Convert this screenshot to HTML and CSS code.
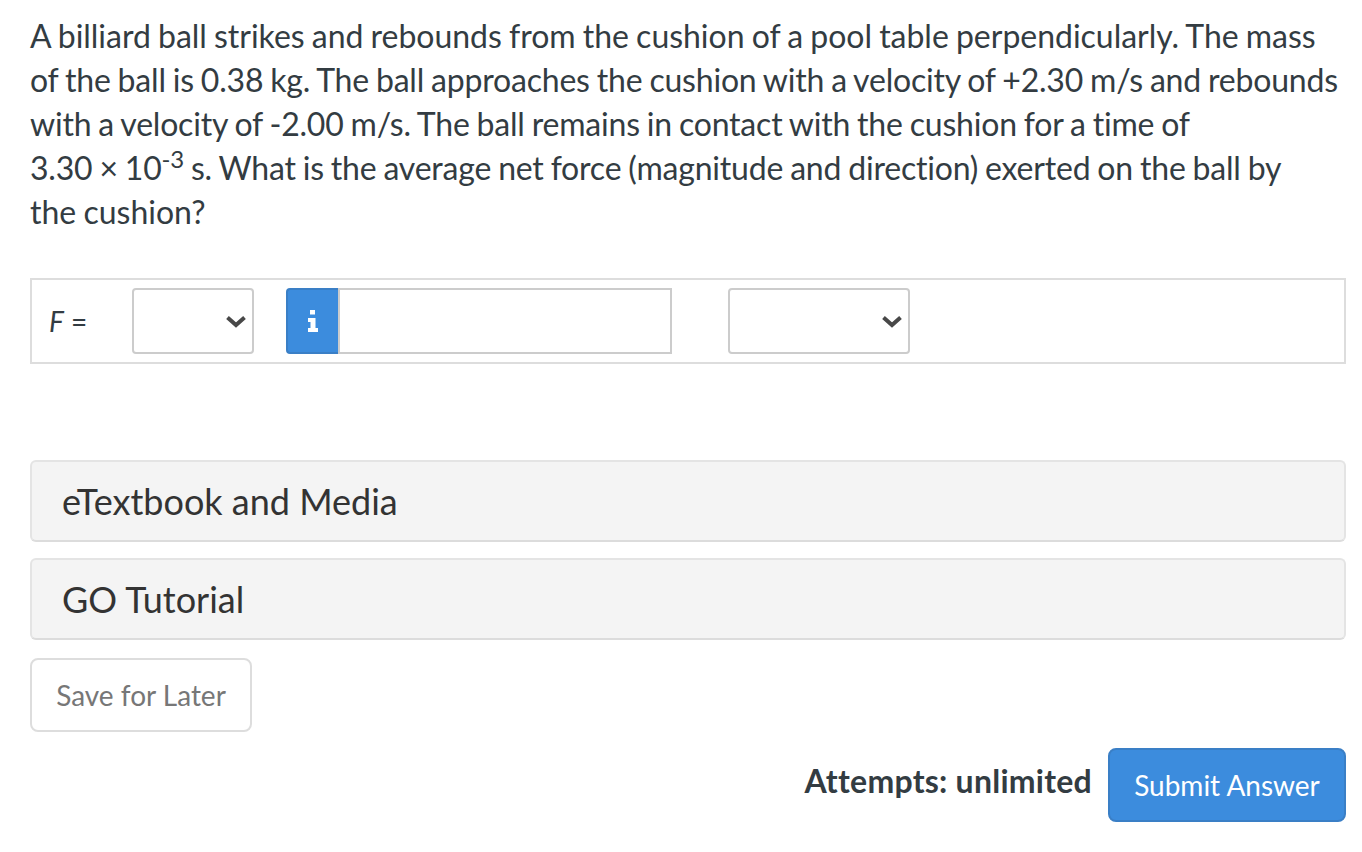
FILE: index.html
```html
<!DOCTYPE html>
<html>

<head>
  <title>Question</title>
  <link rel="stylesheet" href="styles.css">
</head>

<body>
  <div class="container">
    <p class="question">
      <span class="line line-one">A billiard ball strikes and rebounds from the cushion of a pool table perpendicularly. The mass</span>
      <span class="line line-two">of the ball is 0.38 kg. The ball approaches the cushion with a velocity of +2.30 m/s and rebounds</span>
      <span class="line line-three">with a velocity of -2.00 m/s. The ball remains in contact with the cushion for a time of</span>
      <span class="line line-four">3.30 × 10<sup>-3</sup> s. What is the average net force (magnitude and direction) exerted on the ball by</span>
      <span class="line">the cushion?</span>
    </p>

    <div class="answer-box">
      <span class="answer-label"><i>F</i> =</span>
      <div class="select select-sign">
        <svg class="chevron" width="20" height="14" viewBox="0 0 20 14"><path d="M1.5 3.500l8.500 7.500 8.500-7.500" fill="none" stroke="#484848" stroke-width="4"/></svg>
      </div>
      <div class="info-button">
        <svg width="12" height="22" viewBox="0 0 12 22"><path d="M3 0h5v4.500H3zM1 8h7.500v10H11v4H1v-4h2.500v-6H1z" fill="#fff"/></svg>
      </div>
      <div class="value-input"></div>
      <div class="select select-unit">
        <svg class="chevron" width="20" height="14" viewBox="0 0 20 14"><path d="M1.500 3.500l8.500 7.500 8.500-7.500" fill="none" stroke="#484848" stroke-width="4"/></svg>
      </div>
    </div>

    <div class="panel panel-first">eTextbook and Media</div>
    <div class="panel">GO Tutorial</div>

    <button class="save-button">Save for Later</button>

    <div class="submit-row">
      <span class="attempts">Attempts: unlimited</span>
      <button class="submit-button">Submit Answer</button>
    </div>
  </div>
</body>

</html>
```

FILE: styles.css
```css
/* Page */
body {
  margin: 0;
  padding: 0;
  background-color: #fff;
  font-family: 'Lato', sans-serif;
  font-variant-ligatures: none;
  color: #333c42;
}

.container {
  padding: 14px 16px 0 30px;
}

/* Question text */
.question {
  margin: 0;
  font-size: 32px;
  line-height: 44px;
  word-spacing: -1px;
}

.line {
  display: block;
  white-space: nowrap;
}

.line-one {
  letter-spacing: -0.02px;
}

.line-two {
  letter-spacing: -0.2px;
}

.line-three {
  letter-spacing: -0.2px;
}

.line-four {
  letter-spacing: -0.2px;
}

.question sup {
  font-size: 24px;
  line-height: 0;
}

/* Answer row */
.answer-box {
  display: flex;
  align-items: center;
  box-sizing: border-box;
  height: 86px;
  margin-top: 44px;
  padding-left: 17px;
  border: 2px solid #ddd;
}

.answer-label {
  width: 83px;
  font-size: 28px;
}

.select {
  display: flex;
  align-items: center;
  justify-content: flex-end;
  box-sizing: border-box;
  height: 66px;
  padding-right: 6px;
  border: 2px solid #ccc;
  border-radius: 4px;
}

.select-sign {
  width: 122px;
}

.select-unit {
  width: 182px;
  margin-left: 56px;
}

.info-button {
  display: flex;
  align-items: center;
  justify-content: center;
  box-sizing: border-box;
  width: 52px;
  height: 66px;
  margin-left: 32px;
  border: 2px solid #3a7fc6;
  border-right: none;
  border-radius: 4px 0 0 4px;
  background-color: #3c8cdd;
}

.value-input {
  box-sizing: border-box;
  width: 334px;
  height: 66px;
  border: 2px solid #ccc;
}

/* Collapsed panels */
.panel {
  box-sizing: border-box;
  height: 82px;
  margin-top: 16px;
  padding-left: 30px;
  border: 2px solid #e4e4e4;
  border-bottom-color: #dcdcdc;
  border-radius: 6px;
  background-color: #f4f4f4;
  font-size: 36px;
  line-height: 78px;
  color: #333;
}

.panel-first {
  margin-top: 96px;
}

/* Buttons */
.save-button {
  display: block;
  box-sizing: border-box;
  width: 222px;
  height: 74px;
  margin-top: 18px;
  border: 2px solid #ddd;
  border-radius: 8px;
  background-color: #fff;
  color: #777;
  font-family: inherit;
  font-size: 28px;
}

.submit-row {
  display: flex;
  align-items: center;
  justify-content: flex-end;
  gap: 16px;
  margin-top: 16px;
}

.attempts {
  margin-top: -10px;
  font-size: 32px;
  font-weight: bold;
  letter-spacing: 0.25px;
}

.submit-button {
  box-sizing: border-box;
  width: 238px;
  height: 74px;
  border: 2px solid #3a7fc6;
  border-radius: 8px;
  background-color: #3c8cdd;
  color: #fff;
  font-family: inherit;
  font-size: 28px;
}
```
